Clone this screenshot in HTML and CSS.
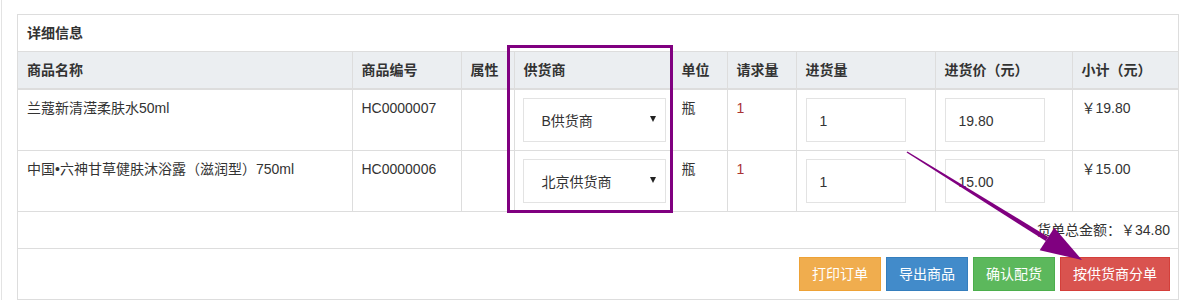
FILE: index.html
```html
<!DOCTYPE html>
<html lang="zh-CN">
<head>
  <meta charset="UTF-8" />
  <title>详细信息</title>
  <link rel="stylesheet" href="styles.css">
</head>
<body>

  <div class="page">
    <div class="panel">
      <div class="panel-heading">详细信息</div>

      <!-- Goods table -->
      <table class="goods">
        <colgroup>
          <col class="c-name">
          <col class="c-code">
          <col class="c-attr">
          <col class="c-supplier">
          <col class="c-unit">
          <col class="c-req">
          <col class="c-qty">
          <col class="c-price">
          <col>
        </colgroup>
        <thead>
          <tr>
            <th>商品名称</th>
            <th>商品编号</th>
            <th>属性</th>
            <th>供货商</th>
            <th>单位</th>
            <th>请求量</th>
            <th>进货量</th>
            <th>进货价（元）</th>
            <th>小计（元）</th>
          </tr>
        </thead>
        <tbody>
          <tr>
            <td>兰蔻新清滢柔肤水50ml</td>
            <td>HC0000007</td>
            <td></td>
            <td><div class="select"><span>B供货商</span><span class="caret"></span></div></td>
            <td>瓶</td>
            <td class="req">1</td>
            <td><input class="field" type="text" value="1"></td>
            <td><input class="field" type="text" value="19.80"></td>
            <td>￥19.80</td>
          </tr>
          <tr>
            <td>中国•六神甘草健肤沐浴露（滋润型）750ml</td>
            <td>HC0000006</td>
            <td></td>
            <td><div class="select"><span>北京供货商</span><span class="caret"></span></div></td>
            <td>瓶</td>
            <td class="req">1</td>
            <td><input class="field" type="text" value="1"></td>
            <td><input class="field" type="text" value="15.00"></td>
            <td>￥15.00</td>
          </tr>
        </tbody>
      </table>

      <div class="total">货单总金额：￥34.80</div>

      <div class="actions">
        <button class="btn btn-orange">打印订单</button>
        <button class="btn btn-blue">导出商品</button>
        <button class="btn btn-green">确认配货</button>
        <button class="btn btn-red">按供货商分单</button>
      </div>
    </div>
  </div>

  <!-- Annotation overlays -->
  <div class="mark-box"></div>
  <svg class="mark-arrow" width="1184" height="300" viewBox="0 0 1184 300">
    <polygon points="906.6,152.6 907.4,151.4 1048.3,236.9 1045.7,241.1" fill="#800080"/>
    <polygon points="1082,260 1039.7,250.2 1054.3,227.8" fill="#800080"/>
  </svg>

</body>
</html>
```

FILE: styles.css
```css
* {
  margin: 0;
  padding: 0;
  box-sizing: border-box;
}

body {
  font-family: "Liberation Sans", "Noto Sans CJK SC", sans-serif;
  font-size: 14px;
  line-height: 20px;
  color: #333;
  background: #fff;
}

.page {
  margin-left: 1px;
  border-left: 1px solid #e3e3e3;
  padding: 14px 5px 0 15px;
  min-height: 300px;
}

/* Panel */
.panel {
  border: 1px solid #ddd;
  background: #fff;
}

.panel-heading {
  padding: 8px 9px;
  font-weight: bold;
}

/* Table */
.goods {
  width: 100%;
  border-collapse: collapse;
  table-layout: fixed;
}

.c-name { width: 334px; }
.c-code { width: 109px; }
.c-attr { width: 53px; }
.c-supplier { width: 158px; }
.c-unit { width: 55px; }
.c-req { width: 69px; }
.c-qty { width: 139px; }
.c-price { width: 137px; }

.goods th,
.goods td {
  padding: 8px 9px;
  text-align: left;
  vertical-align: top;
  border-top: 1px solid #ddd;
  border-left: 1px solid #ddd;
  white-space: nowrap;
}

.goods th:first-child,
.goods td:first-child {
  border-left: none;
}

.goods th {
  background: #ebeef1;
  font-weight: bold;
  border-bottom: 2px solid #ddd;
}

.goods td {
  height: 60px;
}

.goods td.req {
  color: #a33;
}

.select {
  width: 143px;
  height: 44px;
  border: 1px solid #e3e3e3;
  margin-left: -1px;
  padding: 2px 9px 0 18px;
  display: flex;
  align-items: center;
  justify-content: space-between;
}

.caret {
  width: 0;
  height: 0;
  border-left: 3.5px solid transparent;
  border-right: 3.5px solid transparent;
  border-top: 6px solid #222;
  margin-top: -4px;
}

.field {
  width: 100px;
  height: 44px;
  border: 1px solid #e3e3e3;
  padding: 2px 13px 0;
  font: inherit;
  color: #333;
}

/* Footer rows */
.total {
  border-top: 1px solid #ddd;
  padding: 8px 8px;
  text-align: right;
  height: 37px;
}

.actions {
  border-top: 1px solid #ddd;
  padding: 8px 8px;
  display: flex;
  justify-content: flex-end;
  gap: 5px;
}

.btn {
  font-family: inherit;
  font-size: 14px;
  line-height: 20px;
  padding: 6px 12px;
  border: 1px solid transparent;
  border-radius: 0;
  color: #fff;
  cursor: pointer;
}

.btn-orange {
  background: #f0ad4e;
  border-color: #eea236;
}

.btn-blue {
  background: #428bca;
  border-color: #357ebd;
}

.btn-green {
  background: #5cb85c;
  border-color: #4cae4c;
}

.btn-red {
  background: #d9534f;
  border-color: #d43f3a;
}

/* Annotations drawn over the screenshot */
.mark-box {
  position: absolute;
  left: 507px;
  top: 45px;
  width: 166px;
  height: 168px;
  border: 3px solid #800080;
}

.mark-arrow {
  position: absolute;
  left: 0;
  top: 0;
  pointer-events: none;
}
```
